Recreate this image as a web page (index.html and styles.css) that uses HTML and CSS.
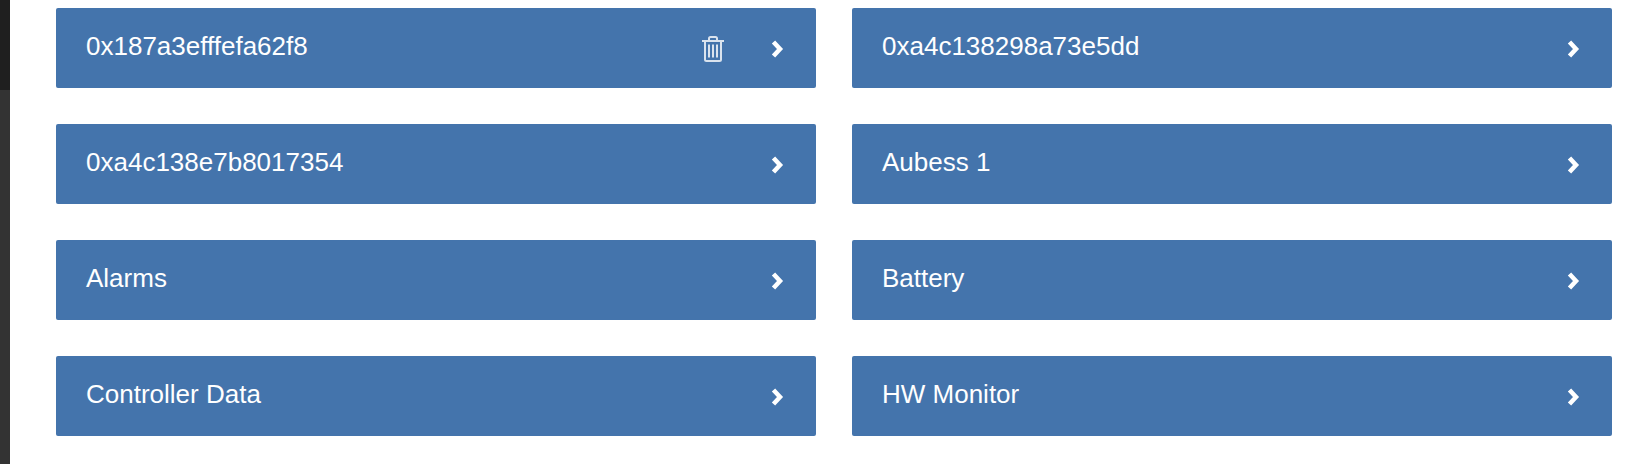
FILE: index.html

```html
<!DOCTYPE html>
<html lang="en">
<head>
  <meta charset="UTF-8">
  <title>Devices</title>
  <link rel="stylesheet" href="styles.css">
</head>
<body>

  <div class="sidebar">
    <div class="sidebar-top"></div>
  </div>

  <div class="content">
    <div class="tile">
      <span class="tile-label">0x187a3efffefa62f8</span>
      <svg class="trash" width="24" height="28" viewBox="0 0 24 28">
        <path d="M7 5.500V3.500A1.500 1.500 0 0 1 8.500 2h5A1.500 1.500 0 0 1 15 3.500V5.500" />
        <path d="M0 6h22" />
        <path d="M3 6v18.500A1.500 1.500 0 0 0 4.500 26h13a1.500 1.500 0 0 0 1.500-1.500V6" />
        <path d="M7 9.500v13M11 9.500v13M15 9.500v13" />
      </svg>
      <svg class="chevron" width="14" height="18" viewBox="0 0 14 18"><path d="M3.500 2L10 9l-6.500 7" /></svg>
    </div>
    <div class="tile">
      <span class="tile-label">0xa4c138298a73e5dd</span>
      <svg class="chevron" width="14" height="18" viewBox="0 0 14 18"><path d="M3.500 2L10 9l-6.500 7" /></svg>
    </div>
    <div class="tile">
      <span class="tile-label">0xa4c138e7b8017354</span>
      <svg class="chevron" width="14" height="18" viewBox="0 0 14 18"><path d="M3.500 2L10 9l-6.500 7" /></svg>
    </div>
    <div class="tile">
      <span class="tile-label">Aubess 1</span>
      <svg class="chevron" width="14" height="18" viewBox="0 0 14 18"><path d="M3.500 2L10 9l-6.500 7" /></svg>
    </div>
    <div class="tile">
      <span class="tile-label">Alarms</span>
      <svg class="chevron" width="14" height="18" viewBox="0 0 14 18"><path d="M3.500 2L10 9l-6.500 7" /></svg>
    </div>
    <div class="tile">
      <span class="tile-label">Battery</span>
      <svg class="chevron" width="14" height="18" viewBox="0 0 14 18"><path d="M3.500 2L10 9l-6.500 7" /></svg>
    </div>
    <div class="tile">
      <span class="tile-label">Controller Data</span>
      <svg class="chevron" width="14" height="18" viewBox="0 0 14 18"><path d="M3.500 2L10 9l-6.500 7" /></svg>
    </div>
    <div class="tile">
      <span class="tile-label">HW Monitor</span>
      <svg class="chevron" width="14" height="18" viewBox="0 0 14 18"><path d="M3.500 2L10 9l-6.500 7" /></svg>
    </div>
  </div>

</body>
</html>
```

FILE: styles.css

```css
html, body {
  height: 100%;
}
body {
  margin: 0;
  display: flex;
  overflow: hidden;
  font-family: 'Liberation Sans', Arial, sans-serif;
  background-color: #fff;
}
.sidebar {
  width: 10px;
  flex-shrink: 0;
  background-color: #333;
}
.sidebar-top {
  height: 90px;
  background-color: #1f1f1f;
}
.content {
  flex: 1;
  display: grid;
  grid-template-columns: 760px 760px;
  grid-auto-rows: 80px;
  column-gap: 36px;
  row-gap: 36px;
  align-content: start;
  padding: 8px 20px 0 46px;
}
.tile {
  display: flex;
  align-items: center;
  padding: 0 32px 0 30px;
  background-color: #4474ac;
  border-radius: 2px;
  color: #fff;
}
.tile-label {
  flex: 1;
  font-size: 26px;
  line-height: 30px;
  margin-bottom: 5px;
}
.trash {
  margin-right: 44px;
  margin-top: 2px;
  fill: none;
  stroke: #dae3ee;
  stroke-width: 2;
}
.chevron {
  margin-top: 2px;
  fill: none;
  stroke: #fff;
  stroke-width: 4.5;
}
```
